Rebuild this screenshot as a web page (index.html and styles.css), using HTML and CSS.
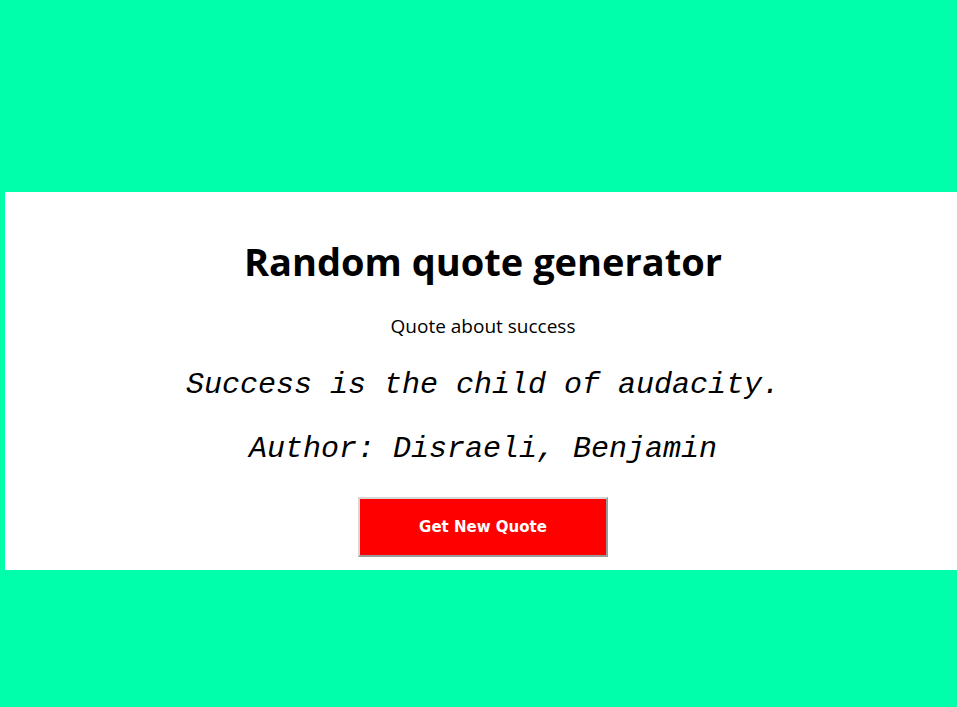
FILE: index.html
```html
<!DOCTYPE html>
<html lang="en">
<head>
<meta charset="utf-8">
<title>Random quote generator</title>
<link rel="stylesheet" href="styles.css">
</head>
<body>
  <main class="card">
    <h1 class="title">Random quote generator</h1>
    <p class="topic">Quote about success</p>
    <p class="quote">Success is the child of audacity.</p>
    <p class="author">Author: Disraeli, Benjamin</p>
    <button class="btn" type="button">Get New Quote</button>
  </main>
</body>
</html>
```

FILE: styles.css
```css
html, body {
  margin: 0;
  padding: 0;
  overflow: hidden;
}
body {
  background: #00ffaa;
  height: 707px;
  padding-top: 192px;
  box-sizing: border-box;
}
.card {
  background: #fff;
  width: 956px;
  margin-left: 5px;
  height: 378px;
  box-sizing: border-box;
  padding-top: 43px;
  display: flex;
  flex-direction: column;
  align-items: center;
  color: #000;
}
.title {
  margin: 0;
  font-family: "Open Sans", sans-serif;
  font-weight: 700;
  font-size: 38px;
  line-height: 52px;
}
.topic {
  margin: 27px 0 0;
  font-family: "Open Sans", sans-serif;
  font-size: 19px;
  line-height: 24px;
}
.quote {
  margin: 27px 0 0;
  font-family: "Liberation Mono", "Courier New", monospace;
  font-style: italic;
  font-size: 30px;
  line-height: 40px;
}
.author {
  margin: 24px 0 0;
  font-family: "Liberation Mono", "Courier New", monospace;
  font-style: italic;
  font-size: 30px;
  line-height: 40px;
}
.btn {
  margin-top: 28px;
  width: 250px;
  height: 60px;
  flex-shrink: 0;
  background: #ff0000;
  color: #fff;
  font-family: "DejaVu Sans", Verdana, sans-serif;
  font-weight: 700;
  font-size: 15px;
  border-style: solid;
  border-width: 2px;
  border-color: #d6d6d6 #9a9a9a #9a9a9a #d6d6d6;
  padding: 0;
}
```
